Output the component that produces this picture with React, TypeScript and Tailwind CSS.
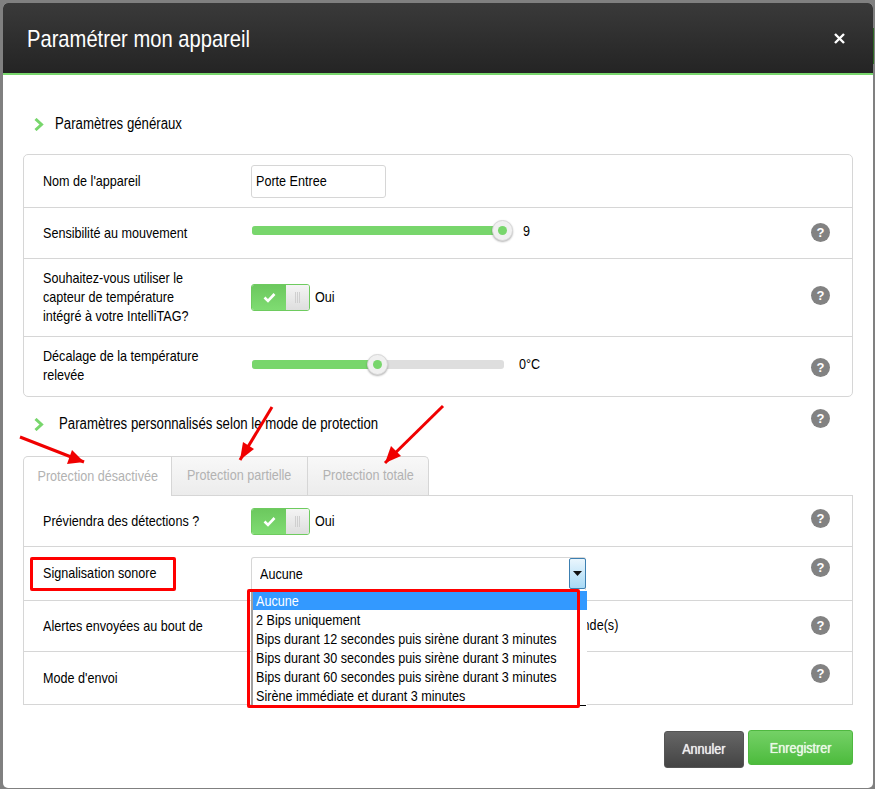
import React from "react";

const font = { fontFamily: '"Liberation Sans", Arial, sans-serif' };

function T({ children, center, className = "" }: { children: React.ReactNode; center?: boolean; className?: string }) {
  return (
    <span className={`inline-block scale-x-[0.84] whitespace-nowrap ${center ? "origin-center" : "origin-left"} ${className}`}>{children}</span>
  );
}

function Help({ className = "" }: { className?: string }) {
  return (
    <span className={`flex h-[19px] w-[19px] shrink-0 items-center justify-center rounded-full bg-[#828282] text-[13px] leading-none font-bold text-white ${className}`}>?</span>
  );
}

function Chevron() {
  return (
    <svg width="10" height="13" viewBox="0 0 10 13" className="shrink-0">
      <path d="M1.5 1 L7.5 6.5 L1.5 12" fill="none" stroke="#78d66c" strokeWidth="3" />
    </svg>
  );
}

function Toggle() {
  return (
    <div className="flex items-center gap-[5px]">
      <div className="flex h-[27px] w-[59px] overflow-hidden rounded-[3px] border border-[#6ecb5f]">
        <div className="flex w-[34px] items-center justify-center bg-gradient-to-b from-[#6cc85e] to-[#7fdc72]">
          <svg width="13" height="11" viewBox="0 0 13 11">
            <path d="M1.5 5.5 L5 9 L11.5 2" fill="none" stroke="white" strokeWidth="2.6" />
          </svg>
        </div>
        <div className="flex flex-1 items-center justify-center gap-px bg-gradient-to-b from-[#f4f4f4] to-[#dedede]">
          <span className="h-[11px] w-px bg-[#cfcfcf]" />
          <span className="h-[11px] w-px bg-[#cfcfcf]" />
          <span className="h-[11px] w-px bg-[#cfcfcf]" />
        </div>
      </div>
      <span className="mb-[2px]">
        <T>Oui</T>
      </span>
    </div>
  );
}

function Slider({ width, fill, value, gap, raised }: { width: number; fill: number; value: string; gap: number; raised?: boolean }) {
  return (
    <div className="mb-[5px] ml-px flex items-center">
      <div className="relative h-[9px] rounded-[3px] bg-[#dedede]" style={{ width }}>
        <div className="h-full rounded-[3px] bg-[#78d66c]" style={{ width: fill }} />
        <div className="absolute top-[-6px] flex h-[21px] w-[21px] items-center justify-center rounded-full border border-[#d8d8d8] bg-[#f0f0f0] shadow-[0_1px_2px_rgba(0,0,0,0.3)]" style={{ left: fill - 10 }}>
          <span className="h-[9px] w-[9px] rounded-full bg-[#78d66c]" />
        </div>
      </div>
      <span className={raised ? "mb-[2px]" : ""} style={{ marginLeft: gap }}>
        <T>{value}</T>
      </span>
    </div>
  );
}

function HelpRow({
  label,
  height,
  help,
  helpTop,
  children,
  last,
}: {
  label: React.ReactNode;
  height: number;
  help?: boolean;
  helpTop?: number;
  children?: React.ReactNode;
  last?: boolean;
}) {
  return (
    <div className={`flex items-start pr-[22px] pl-[19px] ${last ? "" : "border-b border-[#d6d6d6]"}`} style={{ height }}>
      <div className="flex h-full w-[208px] shrink-0 items-center leading-[19px]">
        <div className="mb-[2px]">{label}</div>
      </div>
      <div className="flex h-full flex-1 items-center">{children}</div>
      {help && (
        <div style={{ marginTop: helpTop }}>
          <Help />
        </div>
      )}
    </div>
  );
}

const options = [
  "Aucune",
  "2 Bips uniquement",
  "Bips durant 12 secondes puis sirène durant 3 minutes",
  "Bips durant 30 secondes puis sirène durant 3 minutes",
  "Bips durant 60 secondes puis sirène durant 3 minutes",
  "Sirène immédiate et durant 3 minutes",
];

function Select() {
  return (
    <div className="relative z-10 h-[33px] w-[335px]">
      <div className="flex h-full items-center rounded-t-[3px] border border-b-0 border-[#d6d6d6] bg-white pb-[2px] pl-[8px]">
        <T>Aucune</T>
      </div>
      <div className="absolute top-[1px] left-[318px] flex h-[31px] w-[17px] items-center justify-center rounded-[2px] border border-[#3c7fb1] bg-gradient-to-b from-[#eaf6fd] to-[#a7d9f5]">
        <svg width="9" height="5" viewBox="0 0 9 5">
          <path d="M0 0 H9 L4.5 5 Z" fill="#111" />
        </svg>
      </div>
      <div className="absolute top-[34px] left-0 w-[336px] border-l-2 border-[#a0a0a0] bg-white pb-[1px]">
        {options.map((o, i) => (
          <div key={o} className={`h-[19px] pl-[3px] leading-[19px] whitespace-nowrap ${i === 0 ? "bg-[#3399ff] text-white" : "text-black"}`}>
            <T>{o}</T>
          </div>
        ))}
      </div>
      <div className="absolute top-[148px] left-[329px] h-px w-[6px] bg-black" />
      <div className="absolute top-[32px] left-[-4px] h-[119px] w-[333px] rounded-[2px] border-[3px] border-[#ff0000]" />
    </div>
  );
}

function Tab({ label, width, active }: { label: string; width: number; active?: boolean }) {
  return (
    <div
      className={`flex items-center justify-center border-t border-r border-[#d6d6d6] pb-[3px] text-[#b2b2b2] ${
        active ? "h-[40px] rounded-tl-[5px] border-l bg-white" : "mb-px h-[39px] bg-gradient-to-b from-[#f8f8f8] to-[#ececec]"
      } ${width === 121 ? "rounded-tr-[5px]" : ""}`}
      style={{ width }}
    >
      <T center className="scale-x-[0.83]">{label}</T>
    </div>
  );
}

function Arrows() {
  const arrows = [
    { x1: 20, y1: 437, x2: 84, y2: 462, h: "84,462 67,464 72,450" },
    { x1: 272, y1: 407, x2: 240, y2: 460, h: "240,460 243,442 254,449" },
    { x1: 443, y1: 406, x2: 385, y2: 463, h: "385,463 391,446 401,456" },
  ];
  return (
    <svg className="pointer-events-none absolute top-0 left-0 z-20" width="875" height="789">
      {arrows.map((a) => (
        <g key={a.x1}>
          <line x1={a.x1} y1={a.y1} x2={a.x2} y2={a.y2} stroke="#f00000" strokeWidth="3" />
          <polygon points={a.h} fill="#f00000" />
        </g>
      ))}
    </svg>
  );
}

export default function App() {
  return (
    <div className="relative h-[789px] w-[875px] overflow-hidden bg-[#808080] pt-[3px] pl-[3px] text-[15px] leading-[19px] text-black" style={font}>
      <div className="absolute top-[28px] left-[873px] h-[36px] w-px bg-[#2f6a25]" />
      <div className="h-[785px] w-[870px] overflow-hidden rounded-[5px] bg-white">
        <header className="flex h-[72px] items-center justify-between border-b-2 border-[#78d66c] bg-gradient-to-b from-[#3a3a3a] to-[#242424] pr-[28px] pl-[24px]">
          <h1 className="text-[24px] text-white">
            <T className="scale-x-[0.82]">Paramétrer mon appareil</T>
          </h1>
          <svg width="11" height="11" viewBox="0 0 11 11">
            <path d="M1 1 L10 10 M10 1 L1 10" stroke="white" strokeWidth="2.4" />
          </svg>
        </header>
        <div className="px-[20px]">
          <div className="mt-[35px] mb-[16px] flex h-[28px] items-center pl-[11px] text-[16px]">
            <Chevron />
            <span className="mb-[2px] ml-[11px]">
              <T className="scale-x-[0.825]">Paramètres généraux</T>
            </span>
          </div>
          <section className="overflow-hidden rounded-[5px] border border-[#d6d6d6]">
            <HelpRow label={<T>Nom de l'appareil</T>} height={53}>
              <div className="flex h-[33px] w-[135px] items-center rounded-[3px] border border-[#d6d6d6] pb-[2px] pl-[4px]">
                <T>Porte Entree</T>
              </div>
            </HelpRow>
            <HelpRow label={<T>Sensibilité au mouvement</T>} height={51} help helpTop={15}>
              <Slider width={251} fill={250} value="9" gap={20} />
            </HelpRow>
            <HelpRow
              label={
                <>
                  <T>Souhaitez-vous utiliser le</T>
                  <br />
                  <T>capteur de température</T>
                  <br />
                  <T>intégré à votre IntelliTAG?</T>
                </>
              }
              height={78}
              help
              helpTop={27}
            >
              <Toggle />
            </HelpRow>
            <HelpRow
              label={
                <div className="mb-[2px]">
                  <T>Décalage de la température</T>
                  <br />
                  <T>relevée</T>
                </div>
              }
              height={59}
              help
              helpTop={21}
              last
            >
              <Slider width={252} fill={125} value="0°C" gap={15} raised />
            </HelpRow>
          </section>
          <div className="mt-[13px] flex h-[28px] items-center pr-[23px] pl-[11px] text-[16px]">
            <Chevron />
            <span className="mb-[2px] ml-[15px] flex-1">
              <T className="scale-x-[0.825]">Paramètres personnalisés selon le mode de protection</T>
            </span>
            <Help className="mt-[-12px]" />
          </div>
          <div className="mt-[18px] flex items-end">
            <Tab label="Protection désactivée" width={149} active />
            <Tab label="Protection partielle" width={136} />
            <Tab label="Protection totale" width={121} />
          </div>
          <section className="-mt-px border border-[#d6d6d6] bg-white">
            <HelpRow label={<T>Préviendra des détections ?</T>} height={51} help helpTop={13}>
              <Toggle />
            </HelpRow>
            <HelpRow label={<T>Signalisation sonore</T>} height={54} help helpTop={11}>
              <Select />
            </HelpRow>
            <HelpRow label={<T>Alertes envoyées au bout de</T>} height={51} help helpTop={15}>
              <span className="mb-[3px] ml-[305px]">
                <T>seconde(s)</T>
              </span>
            </HelpRow>
            <HelpRow label={<T>Mode d'envoi</T>} height={52} help helpTop={12} last />
          </section>
          <div className="mt-[25px] flex items-start justify-end gap-[4px]">
            <button className="mt-px h-[37px] w-[80px] rounded-[3px] border border-[#555] bg-gradient-to-b from-[#666] to-[#444] pb-[2px] text-[#eeeeee] [text-shadow:0_0_1px_#ffffff]">
              <T center>Annuler</T>
            </button>
            <button className="h-[35px] w-[105px] rounded-[3px] border border-[#4fb840] bg-gradient-to-b from-[#74d166] to-[#4cbb3c] text-[#eaf9e6] [text-shadow:0_0_1px_#ffffff]">
              <T center>Enregistrer</T>
            </button>
          </div>
        </div>
      </div>
      <div className="pointer-events-none absolute top-[557px] left-[30px] h-[34px] w-[146px] rounded-[2px] border-[3px] border-[#ff0000]" />
      <Arrows />
    </div>
  );
}
